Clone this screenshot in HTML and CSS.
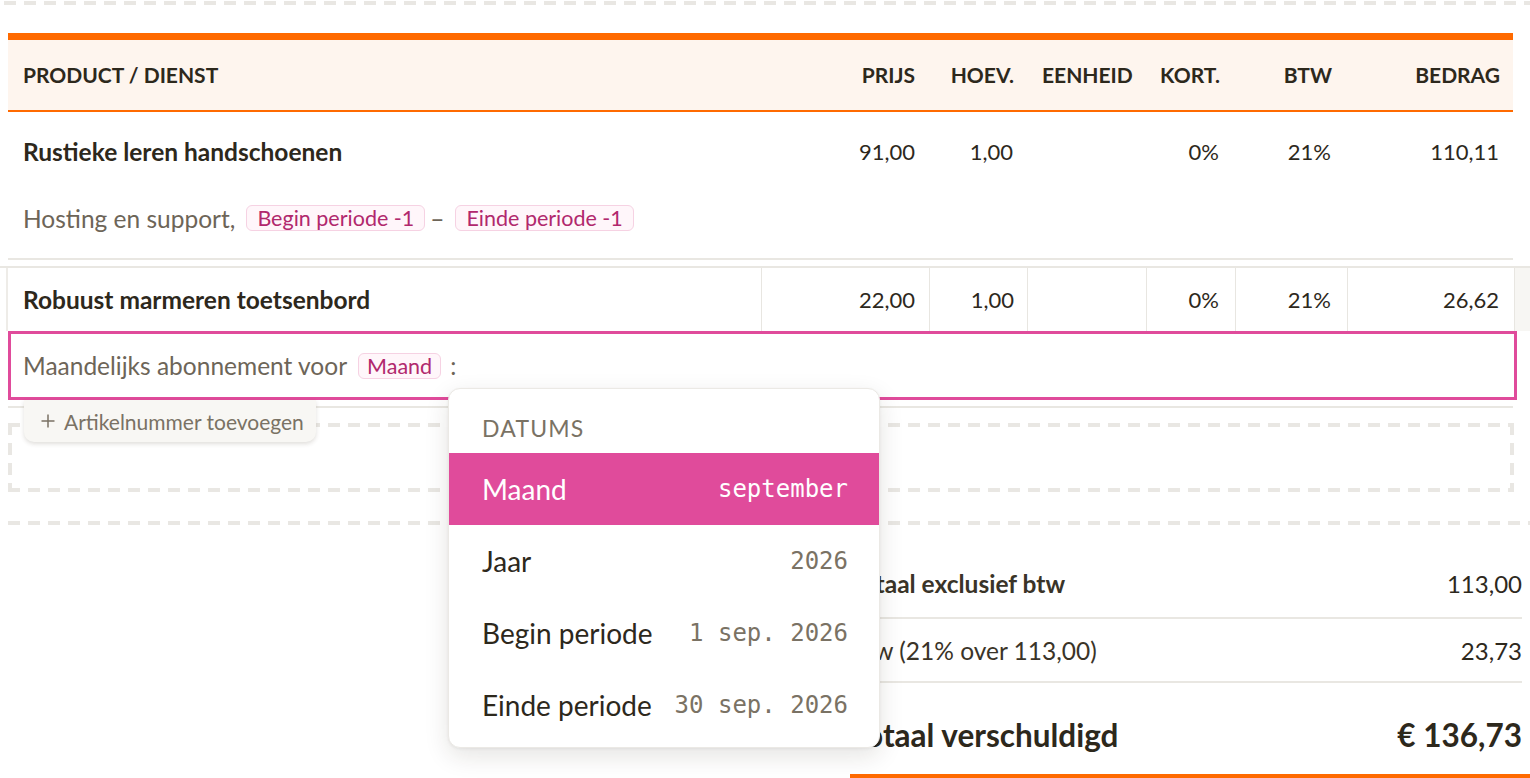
FILE: index.html
```html
<!DOCTYPE html>
<html lang="nl">
<head>
<meta charset="utf-8">
<title>Factuurregels</title>
<link rel="stylesheet" href="styles.css">
</head>
<body>
<div class="page">
  <div class="dash-top"></div>

  <section class="lines">
    <div class="grid thead">
      <div class="th c-product">PRODUCT / DIENST</div>
      <div class="th c-prijs">PRIJS</div>
      <div class="th c-hoev">HOEV.</div>
      <div class="th c-eenheid">EENHEID</div>
      <div class="th c-kort">KORT.</div>
      <div class="th c-btw">BTW</div>
      <div class="th c-bedrag">BEDRAG</div>
    </div>

    <div class="item item-plain">
      <div class="grid cells">
        <div class="cell c-product name">Rustieke leren handschoenen</div>
        <div class="cell c-prijs">91,00</div>
        <div class="cell c-hoev">1,00</div>
        <div class="cell c-eenheid"></div>
        <div class="cell c-kort">0%</div>
        <div class="cell c-btw">21%</div>
        <div class="cell c-bedrag">110,11</div>
      </div>
      <div class="desc">
        <span>Hosting en support,</span>
        <span class="tag">Begin periode -1</span>
        <span class="dash">–</span>
        <span class="tag">Einde periode -1</span>
      </div>
    </div>

    <div class="item item-edit">
      <div class="cells-edit">
        <div class="gutter-l"></div>
        <div class="ecell c-product name">Robuust marmeren toetsenbord</div>
        <div class="ecell c-prijs">22,00</div>
        <div class="ecell c-hoev">1,00</div>
        <div class="ecell c-eenheid"></div>
        <div class="ecell c-kort">0%</div>
        <div class="ecell c-btw">21%</div>
        <div class="ecell c-bedrag">26,62</div>
        <div class="gutter-r"></div>
      </div>
      <div class="desc-edit">
        <span>Maandelijks abonnement voor</span>
        <span class="tag tag-sm">Maand</span>
        <span class="colon">:</span>
      </div>
      <button class="add-sku" type="button">
        <svg class="plus" width="14" height="14" viewBox="0 0 14 14" aria-hidden="true"><path d="M7 0.5v13M0.5 7h13" stroke="currentColor" stroke-width="1.5" fill="none"/></svg>
        <span>Artikelnummer toevoegen</span>
      </button>
    </div>

    <div class="dropzone"></div>
  </section>

  <div class="dash-line"></div>

  <section class="totals">
    <div class="t-row t-sub">
      <span class="t-label">Totaal exclusief btw</span>
      <span class="t-val">113,00</span>
    </div>
    <div class="t-row t-vat">
      <span class="t-label">Btw (21% over 113,00)</span>
      <span class="t-val">23,73</span>
    </div>
    <div class="t-row t-total">
      <span class="t-label">Totaal verschuldigd</span>
      <span class="t-val">€ 136,73</span>
    </div>
  </section>

  <div class="picker">
    <div class="picker-head">DATUMS</div>
    <div class="opt sel"><span>Maand</span><span class="val">september</span></div>
    <div class="opt"><span>Jaar</span><span class="val">2026</span></div>
    <div class="opt"><span>Begin periode</span><span class="val">1 sep. 2026</span></div>
    <div class="opt"><span>Einde periode</span><span class="val">30 sep. 2026</span></div>
  </div>
</div>
</body>
</html>
```

FILE: styles.css
```css
* { box-sizing: border-box; }
html, body { margin: 0; padding: 0; background: #fff; }
body {
  font-family: Lato, "Noto Sans", sans-serif;
  color: #2d281c;
  overflow: hidden;
}
.page {
  position: relative;
  width: 1530px;
  height: 778px;
  overflow: hidden;
}

/* dashed separators */
.dash-top {
  height: 4px;
  margin: 1px 0 0 4px;
  background: repeating-linear-gradient(90deg, #e9e7e3 0 12px, transparent 12px 20px);
}
.dash-line {
  height: 4px;
  margin: 29px 0 0 8px;
  background: repeating-linear-gradient(90deg, #e9e7e3 0 12px, transparent 12px 20px);
}

/* line items table */
.lines { margin: 28px 17px 0 8px; }
.grid {
  display: grid;
  grid-template-columns: 754px 168px 98px 119px 89px 112px 165px;
}
.thead {
  height: 79px;
  border-top: 7px solid #ff6a00;
  border-bottom: 2px solid #ff6a00;
  background: #fef5ee;
  align-items: center;
  padding-bottom: 2px;
}
.th {
  font-size: 21px;
  font-weight: 700;
  color: #2d281c;
  text-align: right;
  white-space: nowrap;
}
.th.c-product { text-align: left; padding-left: 15px; }
.th.c-prijs { padding-right: 15px; }
.th.c-hoev { padding-right: 14px; }
.th.c-eenheid { text-align: left; padding-left: 14px; }
.th.c-kort { padding-right: 16px; }
.th.c-btw { padding-right: 16px; }
.th.c-bedrag { padding-right: 13px; }

.item-plain {
  padding: 26px 0 24px;
  border-bottom: 2px solid #e9e7e2;
}
.cells { line-height: 28px; font-size: 22px; }
.cell { text-align: right; white-space: nowrap; }
.cell.c-product { text-align: left; padding-left: 15px; }
.cell.c-prijs { padding-right: 15px; }
.cell.c-hoev { padding-right: 15px; }
.cell.c-kort { padding-right: 17px; }
.cell.c-btw { padding-right: 17px; }
.cell.c-bedrag { padding-right: 14px; }
.name { font-weight: 700; font-size: 24.5px; }

.desc {
  display: flex;
  align-items: center;
  height: 32px;
  margin-top: 36px;
  padding-left: 15px;
  font-size: 24.5px;
  color: #6d6558;
  white-space: nowrap;
}
.tag {
  display: inline-flex;
  align-items: center;
  height: 26px;
  padding: 0 10px;
  margin-left: 11px;
  border: 1.5px solid #f6d2e3;
  border-radius: 6px;
  background: #fff6fa;
  color: #b1286d;
  font-size: 21.5px;
}
.tag-sm { padding: 0 8px; }
.dash { margin: 0 0 0 5px; }
.dash + .tag { margin-left: 11px; }
.colon { margin-left: 9px; }

/* row being edited */
.item-edit {
  position: relative;
  padding: 6px 0 6px;
  border-bottom: 2px solid #e9e7e2;
}
.cells-edit {
  display: grid;
  grid-template-columns: 8px 754px 168px 98px 119px 89px 112px 167px 15px;
  height: 65px;
  margin: 0 -17px 0 -8px;
  border-top: 2px solid #e9e7e2;
  font-size: 22px;
}
.gutter-l { border-right: 2px solid #eeece8; }
.gutter-r { background: #f7f6f3; }
.ecell {
  display: flex;
  align-items: center;
  justify-content: flex-end;
  border-right: 1px solid #e8e6e1;
  white-space: nowrap;
}
.ecell.c-product { justify-content: flex-start; padding-left: 15px; }
.ecell.c-prijs { padding-right: 14px; }
.ecell.c-hoev { padding-right: 13px; }
.ecell.c-kort { padding-right: 16px; }
.ecell.c-btw { padding-right: 16px; }
.ecell.c-bedrag { padding-right: 15px; }

.desc-edit {
  display: flex;
  align-items: center;
  height: 69px;
  margin-right: -4px;
  padding-left: 12px;
  border: 3px solid #e04b9b;
  font-size: 24.5px;
  color: #6d6558;
  white-space: nowrap;
}

.add-sku {
  position: absolute;
  left: 16px;
  top: 140px;
  width: 292px;
  height: 42px;
  display: flex;
  align-items: center;
  gap: 9px;
  padding: 0 0 0 17px;
  border: 0;
  border-radius: 0 0 10px 10px;
  background: #f8f7f4;
  box-shadow: 0 2px 4px rgba(60, 50, 30, 0.16);
  font-family: Lato, "Noto Sans", sans-serif;
  font-size: 21px;
  color: #7a7264;
  z-index: 2;
}
.plus { flex: none; }

.dropzone {
  height: 69px;
  margin: 15px -1px 0 0;
  background:
    repeating-linear-gradient(90deg, #e9e7e3 0 12px, transparent 12px 20px) left top / 100% 4px no-repeat,
    repeating-linear-gradient(90deg, #e9e7e3 0 12px, transparent 12px 20px) left bottom / 100% 4px no-repeat,
    repeating-linear-gradient(180deg, #e9e7e3 0 12px, transparent 12px 20px) left top / 4px 100% no-repeat,
    repeating-linear-gradient(180deg, #e9e7e3 0 12px, transparent 12px 20px) right top / 4px 100% no-repeat;
}

/* totals */
.totals {
  margin-left: 850px;
  width: 680px;
  padding-top: 25px;
  border-bottom: 4px solid #ff6a00;
}
.t-row {
  display: flex;
  align-items: center;
  justify-content: space-between;
  margin-right: 8px;
  white-space: nowrap;
}
.t-sub { height: 69px; border-bottom: 2px solid #e9e7e2; }
.t-sub .t-label { font-weight: 700; font-size: 24.5px; color: #3a3428; }
.t-vat { height: 64px; border-bottom: 2px solid #e9e7e2; }
.t-vat .t-label { font-size: 24.5px; color: #3a3428; }
.t-val { font-size: 24px; color: #2d281c; }
.t-total { height: 91px; padding-top: 13px; }
.t-total .t-label, .t-total .t-val { font-size: 31.5px; font-weight: 700; color: #2d281c; }

/* placeholder picker */
.picker {
  position: absolute;
  left: 448px;
  top: 388px;
  width: 432px;
  height: 360px;
  background: #fff;
  border: 1px solid #ebe9e5;
  border-radius: 12px;
  box-shadow: 0 8px 24px rgba(40, 30, 20, 0.12), 0 1px 3px rgba(0, 0, 0, 0.06);
  overflow: hidden;
  z-index: 5;
}
.picker-head {
  height: 64px;
  padding: 26px 0 0 33px;
  font-size: 23px;
  line-height: 26px;
  letter-spacing: 1.2px;
  color: #7a7264;
}
.opt {
  display: flex;
  align-items: center;
  justify-content: space-between;
  height: 72px;
  padding: 0 31px 0 33px;
  font-size: 28px;
  color: #2d281c;
  white-space: nowrap;
}
.opt .val {
  font-family: "DejaVu Sans Mono", "Liberation Mono", monospace;
  font-size: 24px;
  color: #7a7264;
}
.opt.sel { background: #e04b9b; color: #fff; }
.opt.sel .val { color: #fff; }
```
